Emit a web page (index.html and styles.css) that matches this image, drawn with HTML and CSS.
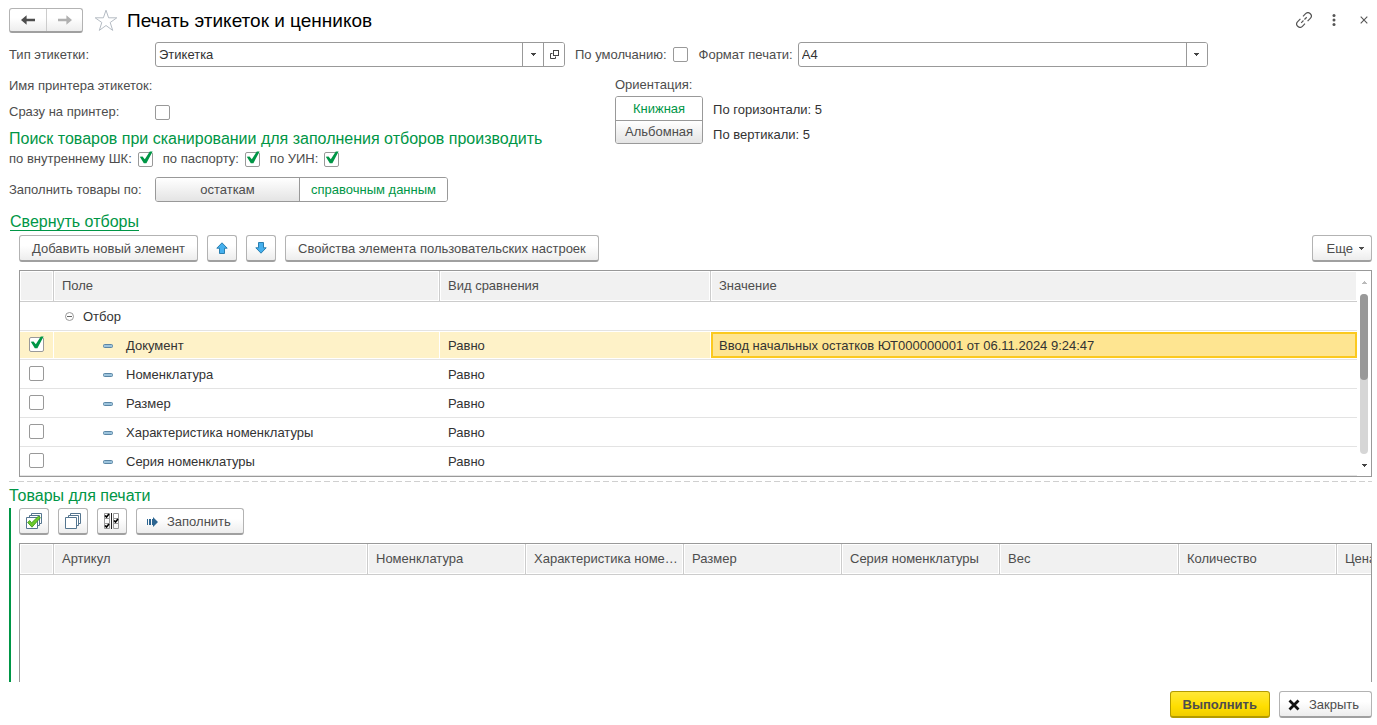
FILE: index.html
```html
<!DOCTYPE html>
<html lang="ru">
<head>
<meta charset="utf-8">
<title>Печать этикеток и ценников</title>
<link rel="stylesheet" href="styles.css">
</head>
<body>
<svg class="defs" aria-hidden="true">
  <symbol id="tick" viewBox="0 0 15 15"><path d="M1.800 5.800 4.500 5.600 6.800 8.200 11.800 .400H14.600L8.400 12.200H5.800Z" fill="#009646"/></symbol>
  <symbol id="caret" viewBox="0 0 5 3"><path d="M0 0H5V1H4V2H3V3H2V2H1V1H0Z" fill="currentColor"/></symbol>
  <symbol id="item" viewBox="0 0 10 4"><rect x=".5" y=".5" width="9" height="3" rx="1" fill="#9cc3dc" stroke="#5b86a5"/></symbol>
</svg>

<main class="page">
  <header class="header">
    <div class="nav">
      <button type="button" class="nav-btn" aria-label="Назад"><svg width="14" height="12" viewBox="0 0 14 12"><path d="M0 6 5.6 1.2V4.8H14V7.2H5.6V10.8Z" fill="#4d4d4d"/></svg></button>
      <button type="button" class="nav-btn nav-next" aria-label="Вперед"><svg width="14" height="12" viewBox="0 0 14 12"><path d="M14 6 8.4 1.2V4.8H0V7.2H8.4V10.8Z" fill="#b0b0b0"/></svg></button>
    </div>
    <button type="button" class="plain star" aria-label="Избранное"><svg width="24" height="23" viewBox="0 0 24 23"><path d="M12 1.2 14.6 8.8H22.8L16.2 13.5 18.7 21.4 12 16.5 5.3 21.4 7.8 13.5 1.2 8.8H9.4Z" fill="#fff" stroke="#b5bcc4"/></svg></button>
    <h1 class="title">Печать этикеток и ценников</h1>
    <div class="window-tools">
      <button type="button" class="plain" aria-label="Ссылка"><svg width="16" height="16" viewBox="0 0 16 16" fill="none" stroke="#555" stroke-width="1.2"><path d="M7 4.3 9.6 1.7a3.2 3.2 0 0 1 4.7 4.7L11.6 9.1M9 11.7 6.4 14.3a3.2 3.2 0 0 1-4.7-4.7L4.4 6.9"/><path d="M5.2 10.8 10.8 5.2" stroke-dasharray="3.2 1.4"/></svg></button>
      <button type="button" class="plain" aria-label="Меню"><svg width="4" height="12" viewBox="0 0 4 12" fill="#555"><circle cx="2" cy="1.6" r="1.5"/><circle cx="2" cy="6" r="1.5"/><circle cx="2" cy="10.4" r="1.5"/></svg></button>
      <button type="button" class="plain" aria-label="Закрыть окно"><svg width="8" height="8" viewBox="0 0 8 8"><path d="M.7.7 7.3 7.3M7.3.7.7 7.3" stroke="#555" stroke-width="1.1"/></svg></button>
    </div>
  </header>

  <div class="row">
    <label class="label" for="type">Тип этикетки:</label>
    <div class="field">
      <input id="type" class="field-input" type="text" value="Этикетка">
      <button type="button" class="field-btn" aria-label="Выбрать"><svg width="5" height="3"><use href="#caret"/></svg></button>
      <button type="button" class="field-btn" aria-label="Открыть"><svg width="9" height="9" viewBox="0 0 9 9" fill="none" stroke="#444"><rect x="3.5" y=".5" width="5" height="5"/><path d="M2.5 3.5H.5V8.5H5.5V6.5"/></svg></button>
    </div>
    <label class="check by-default">По умолчанию: <span class="box"><input type="checkbox"></span></label>
    <label for="format">Формат печати:</label>
    <div class="field field-format">
      <select id="format" class="field-input"><option>A4</option></select>
      <span class="field-caret"><svg width="5" height="3"><use href="#caret"/></svg></span>
    </div>
  </div>

  <div class="settings">
    <div class="settings-main">
      <div class="line">Имя принтера этикеток:</div>
      <div class="line"><label class="label" for="direct">Сразу на принтер:</label><span class="box"><input id="direct" type="checkbox"></span></div>
      <h2 class="group-title">Поиск товаров при сканировании для заполнения отборов производить</h2>
      <div class="checks">
        <label class="check">по внутреннему ШК: <span class="box"><input type="checkbox" checked><svg><use href="#tick"/></svg></span></label>
        <label class="check">по паспорту: <span class="box"><input type="checkbox" checked><svg><use href="#tick"/></svg></span></label>
        <label class="check">по УИН: <span class="box"><input type="checkbox" checked><svg><use href="#tick"/></svg></span></label>
      </div>
      <div class="fill-by">
        <span class="label">Заполнить товары по:</span>
        <div class="switch">
          <button type="button" class="switch-btn">остаткам</button>
          <button type="button" class="switch-btn on">справочным данным</button>
        </div>
      </div>
    </div>
    <div class="orientation">
      <div>Ориентация:</div>
      <div class="orientation-body">
        <div class="switch switch-column">
          <button type="button" class="switch-btn on">Книжная</button>
          <button type="button" class="switch-btn">Альбомная</button>
        </div>
        <div class="counts"><span>По горизонтали: 5</span><span>По вертикали: 5</span></div>
      </div>
    </div>
  </div>

  <a class="collapse" href="#filters">Свернуть отборы</a>

  <section id="filters" class="filters">
    <div class="toolbar">
      <button type="button" class="btn">Добавить новый элемент</button>
      <button type="button" class="btn btn-icon" aria-label="Вверх"><svg width="12" height="12" viewBox="0 0 12 12"><path d="M6 .8 11.2 6.2H8.5V11.5H3.5V6.2H.8Z" fill="#45b0ee" stroke="#2b7fb0"/></svg></button>
      <button type="button" class="btn btn-icon" aria-label="Вниз"><svg width="12" height="12" viewBox="0 0 12 12"><path d="M6 11.2 11.2 5.8H8.5V.5H3.5V5.8H.8Z" fill="#45b0ee" stroke="#2b7fb0"/></svg></button>
      <button type="button" class="btn">Свойства элемента пользовательских настроек</button>
      <button type="button" class="btn btn-more">Еще <svg width="5" height="3"><use href="#caret"/></svg></button>
    </div>
    <div class="grid-box">
      <table class="grid filter-grid">
        <colgroup><col class="c-mark"><col class="c-field"><col class="c-kind"><col></colgroup>
        <thead><tr><th></th><th>Поле</th><th>Вид сравнения</th><th>Значение</th></tr></thead>
        <tbody>
          <tr><td></td><td><span class="tree-root"><svg width="9" height="9" viewBox="0 0 9 9" fill="none" stroke="#999"><circle cx="4.5" cy="4.5" r="4"/><path d="M2 4.5H7" stroke="#666"/></svg>Отбор</span></td><td></td><td></td></tr>
          <tr class="selected"><td><span class="box"><input type="checkbox" checked aria-label="Документ"><svg><use href="#tick"/></svg></span></td><td><span class="tree-item"><svg width="10" height="4"><use href="#item"/></svg>Документ</span></td><td>Равно</td><td class="current">Ввод начальных остатков ЮТ000000001 от 06.11.2024 9:24:47</td></tr>
          <tr><td><span class="box"><input type="checkbox" aria-label="Номенклатура"></span></td><td><span class="tree-item"><svg width="10" height="4"><use href="#item"/></svg>Номенклатура</span></td><td>Равно</td><td></td></tr>
          <tr><td><span class="box"><input type="checkbox" aria-label="Размер"></span></td><td><span class="tree-item"><svg width="10" height="4"><use href="#item"/></svg>Размер</span></td><td>Равно</td><td></td></tr>
          <tr><td><span class="box"><input type="checkbox" aria-label="Характеристика номенклатуры"></span></td><td><span class="tree-item"><svg width="10" height="4"><use href="#item"/></svg>Характеристика номенклатуры</span></td><td>Равно</td><td></td></tr>
          <tr><td><span class="box"><input type="checkbox" aria-label="Серия номенклатуры"></span></td><td><span class="tree-item"><svg width="10" height="4"><use href="#item"/></svg>Серия номенклатуры</span></td><td>Равно</td><td></td></tr>
        </tbody>
      </table>
      <div class="scroll">
        <svg class="scroll-up" width="5" height="3"><use href="#caret"/></svg>
        <div class="scroll-track"><div class="scroll-thumb"></div></div>
        <svg width="5" height="3"><use href="#caret"/></svg>
      </div>
    </div>
  </section>

  <div class="splitter"></div>
  <h2 class="group-title goods-title">Товары для печати</h2>

  <section class="goods">
    <div class="toolbar">
      <button type="button" class="btn btn-icon" aria-label="Отметить все"><svg width="16" height="16" viewBox="0 0 16 16"><g fill="#fff" stroke="#54758f"><path d="M5.5.5H15.5V10.5H5.5Z"/><path d="M3.5 2.5H13.5V12.5H3.5Z"/><path d="M.5 4.5H11.5V15.5H.5Z"/></g><path d="M1.600 9.400 3.800 7.600 5.600 9.800 12.600 3 14.400 4.800 6 14.200Z" fill="#6cc92c" stroke="#349316" stroke-width=".8"/></svg></button>
      <button type="button" class="btn btn-icon" aria-label="Снять отметки"><svg width="16" height="16" viewBox="0 0 16 16"><g fill="#fff" stroke="#54758f"><path d="M5.5.5H15.5V10.5H5.5Z"/><path d="M3.5 2.5H13.5V12.5H3.5Z"/><path d="M.5 4.5H11.5V15.5H.5Z"/></g></svg></button>
      <button type="button" class="btn btn-icon" aria-label="Инвертировать отметки"><svg width="16" height="16" viewBox="0 0 16 16" fill="none"><path d="M.5.5H5.5V5.5H.5ZM.5 5.5H5.5V10.5H.5ZM.5 10.5H5.5V15.5H.5ZM9.500.5H14.500V5.5H9.500ZM9.500 5.500H14.500V10.500H9.500ZM9.500 10.500H14.500V15.500H9.500Z" stroke="#999"/><path d="M7.500 0V16" stroke="#222"/><path d="M1 2.500 2.500 4 5 1M1 12.500 2.500 14 5 11M10 7.500 11.500 9 14 6" stroke="#000" stroke-width="1.700"/></svg></button>
      <button type="button" class="btn btn-fill"><svg width="11" height="10" viewBox="0 0 11 10" fill="#2c6591"><path d="M0 2H1V8H0ZM2 2H4V8H2ZM5 2H6V0L11 5 6 10V8H5Z"/></svg>Заполнить</button>
    </div>
    <div class="grid-box goods-box">
      <table class="grid goods-grid">
        <colgroup><col class="c-mark"><col class="c-article"><col class="c-std"><col class="c-std"><col class="c-std"><col class="c-std"><col class="c-weight"><col class="c-std"><col class="c-std"></colgroup>
        <thead><tr><th></th><th>Артикул</th><th>Номенклатура</th><th>Характеристика номенклатуры</th><th>Размер</th><th>Серия номенклатуры</th><th>Вес</th><th>Количество</th><th>Цена</th></tr></thead>
      </table>
    </div>
  </section>

  <footer class="footer">
    <button type="button" class="btn btn-primary">Выполнить</button>
    <button type="button" class="btn btn-close"><svg width="12" height="12" viewBox="0 0 12 12"><path d="M1.500 1.500 10.500 10.500M10.500 1.500 1.500 10.500" stroke="#111" stroke-width="2.800"/></svg>Закрыть</button>
  </footer>
</main>
</body>
</html>
```

FILE: styles.css
```css
* { box-sizing: border-box; }

body {
  margin: 0;
  background: #fff;
  color: #4d4d4d;
  font: 13px/16px "Liberation Sans", Arial, sans-serif;
}

button, input, select { font: inherit; color: inherit; margin: 0; }
svg { display: block; flex: none; }
.defs { position: absolute; width: 0; height: 0; }

.page {
  display: flex;
  flex-direction: column;
  min-height: 100vh;
  padding: 8px 5px 7px 9px;
}

/* Window header */
.header { display: flex; align-items: center; height: 25px; }
.nav {
  display: flex;
  height: 25px;
  border: 1px solid #b3b3b3;
  border-bottom: 2px solid #a0a0a0;
  border-radius: 3px;
  background: linear-gradient(#fff 40%, #ededed);
}
.nav-btn {
  display: grid;
  place-items: center;
  width: 36px;
  padding: 0;
  border: 0;
  background: none;
}
.nav-next { border-left: 1px solid #ccc; }
.plain { display: grid; place-items: center; padding: 0; border: 0; background: none; }
.star { margin: 0 9px 0 11px; }
.title { margin: 0; color: #000; font-size: 19px; font-weight: normal; line-height: 24px; }
.window-tools { display: flex; align-items: center; gap: 20px; margin: 0 4px 2px auto; }
.window-tools .plain:last-child { margin-left: 4px; }

/* Fields */
.row { display: flex; align-items: center; margin-top: 9px; }
.label { flex: none; width: 146px; }
.field {
  position: relative;
  display: flex;
  flex: 0 1 410px;
  height: 25px;
  border: 1px solid #999;
  border-radius: 3px;
  background: #fff;
  overflow: hidden;
}
.field-format { margin-left: 5px; }
.field-input {
  flex: 1;
  min-width: 0;
  padding: 0 3px;
  border: 0;
  outline: 0;
  appearance: none;
  background: none;
  color: #333;
}
.field-btn, .field-caret {
  display: grid;
  place-items: center;
  width: 21px;
  padding: 0;
  border: 0;
  border-left: 1px solid #999;
  background: #fff;
  color: #444;
}
.field-caret { position: absolute; top: 0; right: 0; bottom: 0; pointer-events: none; }

.check { display: flex; align-items: center; gap: 6px; }
.by-default { margin: 0 11px 0 10px; }
.box { position: relative; display: block; width: 15px; height: 15px; }
.box input {
  display: block;
  width: 15px;
  height: 15px;
  border: 1px solid #999;
  border-radius: 2px;
  appearance: none;
  background: #fff;
}
.box svg { position: absolute; top: -1px; left: 0; width: 15px; height: 15px; pointer-events: none; }

/* Settings */
.settings { display: flex; padding-top: 6px; }
.settings-main { flex: 0 0 606px; }
.line { display: flex; align-items: center; height: 26px; }
.group-title { margin: 0; color: #009646; font-size: 16px; font-weight: normal; line-height: 20px; }
.settings-main .group-title { margin-top: 4px; }
.checks { display: flex; gap: 10px; height: 20px; align-items: center; }
.fill-by { display: flex; align-items: center; margin-top: 8px; }
.switch {
  display: flex;
  border: 1px solid #999;
  border-radius: 3px;
  overflow: hidden;
}
.switch-btn {
  flex: 1 0 auto;
  min-width: 143px;
  height: 23px;
  padding: 0 11px;
  border: 0;
  background: linear-gradient(#fff, #e4e4e4);
}
.switch-btn + .switch-btn { border-left: 1px solid #999; }
.switch-btn.on { background: #fff; color: #009646; }
.switch-column { flex-direction: column; }
.switch-column .switch-btn { min-width: 0; padding: 0 9px; }
.switch-column .switch-btn + .switch-btn { border-left: 0; border-top: 1px solid #999; }
.orientation { padding-top: 4px; }
.orientation-body { display: flex; gap: 10px; margin-top: 3px; color: #333; }
.orientation-body .switch { color: #4d4d4d; }
.counts { display: flex; flex-direction: column; gap: 9px; padding-top: 6px; }

.collapse {
  align-self: flex-start;
  margin: 11px 0 0 1px;
  border-bottom: 1px solid #009646;
  color: #009646;
  font-size: 16px;
  line-height: 17px;
  text-decoration: none;
}

/* Toolbars and buttons */
.toolbar { display: flex; gap: 9px; }
.btn {
  display: flex;
  align-items: center;
  justify-content: center;
  height: 27px;
  padding: 1px 12px 0;
  border: 1px solid #b3b3b3;
  border-bottom: 2px solid #a0a0a0;
  border-radius: 3px;
  background: linear-gradient(#fff 40%, #ededed);
}
.btn-icon { width: 30px; padding: 0; }
.btn-more { gap: 6px; margin-left: auto; padding: 1px 7px 0 14px; }
.btn-fill { gap: 9px; padding: 1px 12px 0 10px; }
.btn-primary {
  border-color: #b39b00;
  background: linear-gradient(#ffe838, #ffde00 60%, #f0cd00);
  font-weight: bold;
}
.btn-close { gap: 9px; padding: 1px 12px 0 8px; }

/* Tables */
.filters { padding: 4px 0 0 10px; }
.grid-box {
  display: flex;
  margin-top: 8px;
  border: 1px solid #999;
}
.grid { flex: 1; min-width: 0; width: 100%; border-collapse: separate; border-spacing: 0; table-layout: fixed; }
.grid th {
  height: 31px;
  padding: 0 2px 0 8px;
  border: 1px solid #ccc;
  border-width: 0 1px 1px 0;
  background: #f1f1f1;
  box-shadow: inset 0 0 0 1px #fff;
  font-weight: normal;
  text-align: left;
  white-space: nowrap;
  overflow: hidden;
  text-overflow: ellipsis;
}
.grid th:last-child { border-right: 0; }
.grid td {
  height: 29px;
  padding: 1px 8px 0;
  border-bottom: 1px solid #e3e3e3;
  color: #333;
}
.grid td:first-child { padding: 0 9px 2px; }
.c-mark { width: 34px; }
.c-field { width: 386px; }
.c-kind { width: 271px; }
.tree-root { display: flex; align-items: center; gap: 9px; padding-left: 3px; }
.tree-item { display: flex; align-items: center; gap: 13px; padding-left: 41px; }
.selected td { background: #fef2c8; box-shadow: inset -1px 1px #fff, inset 0 -1px #fff; }
.grid .selected .current {
  background: #fee591;
  box-shadow: inset 0 1px #fff, inset 0 -1px #fff, inset 2px 3px #fbc91f, inset -2px -3px #fbc91f;
}

.scroll {
  display: flex;
  flex: none;
  flex-direction: column;
  align-items: center;
  width: 14px;
  padding: 10px 0 9px;
  color: #444;
}
.scroll-up { transform: rotate(180deg); color: #bbb; }
.scroll-track { flex: 1; width: 8px; margin: 10px 0; border-radius: 4px; background: #d6d6d6; }
.scroll-thumb { height: 54%; border-radius: 4px; background: #999; }

.splitter {
  height: 1px;
  margin-top: 4px;
  background: repeating-linear-gradient(90deg, #d0d0d0 0 6px, #fff 6px 9px);
}
.goods-title { margin: 4px 0 2px; }
.goods {
  display: flex;
  flex: 1;
  flex-direction: column;
  padding-left: 8px;
  border-left: 2px solid #009646;
}
.goods-box { flex: 1; align-items: flex-start; border-bottom: 0; overflow: hidden; }
.goods-grid { flex: none; width: 1475px; }
.c-article { width: 314px; }
.c-std { width: 158px; }
.c-weight { width: 179px; }

.footer { display: flex; justify-content: flex-end; gap: 9px; margin-top: 9px; }
```
